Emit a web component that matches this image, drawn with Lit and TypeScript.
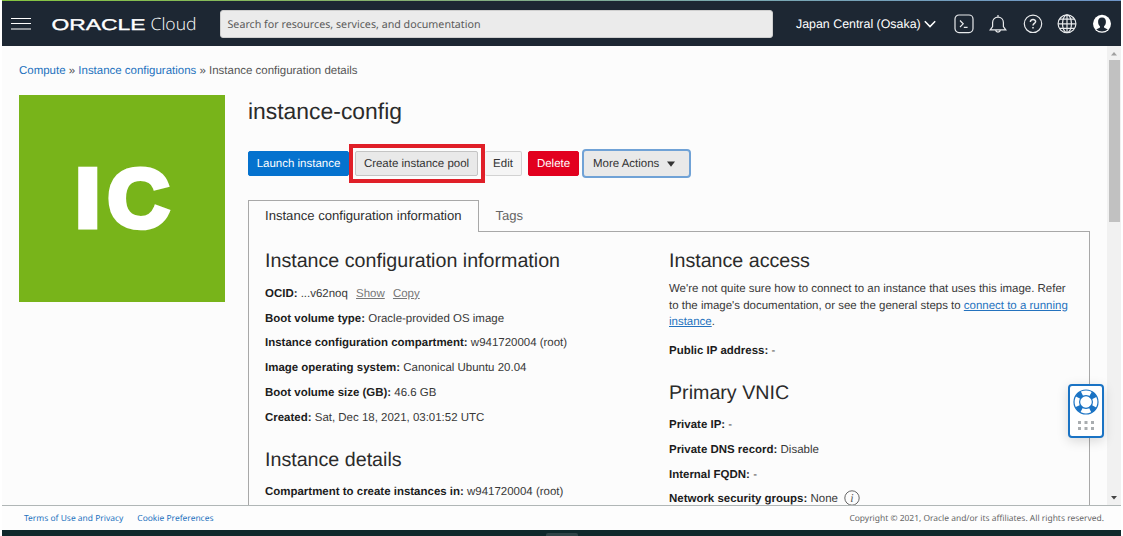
import { LitElement, html, css, svg } from "lit";
import { customElement, property } from "lit/decorators.js";

type Field = { label: string; value: string };

const CONFIG_FIELDS: Field[] = [
  { label: "Boot volume type", value: "Oracle-provided OS image" },
  { label: "Instance configuration compartment", value: "w941720004 (root)" },
  { label: "Image operating system", value: "Canonical Ubuntu 20.04" },
  { label: "Boot volume size (GB)", value: "46.6 GB" },
  { label: "Created", value: "Sat, Dec 18, 2021, 03:01:52 UTC" },
];

const VNIC_FIELDS: Field[] = [
  { label: "Private IP", value: "-" },
  { label: "Private DNS record", value: "Disable" },
  { label: "Internal FQDN", value: "-" },
];

@customElement("detail-row")
class DetailRow extends LitElement {
  @property() label = "";
  static styles = css`
    :host {
      display: block;
      height: 24.8px;
      line-height: 24.8px;
      white-space: nowrap;
    }
    .label {
      font-weight: 700;
      color: #1c1c1c;
    }
  `;
  render() {
    return html`<span class="label">${this.label}:</span> <slot></slot>`;
  }
}

@customElement("top-bar")
class TopBar extends LitElement {
  static styles = css`
    :host {
      display: flex;
      align-items: center;
      box-sizing: border-box;
      height: 46px;
      padding-top: 1px;
      flex: none;
      background: linear-gradient(90deg, #86c540, #86b070 35%, #7aa9b0 65%, #6d94c8) 0 0 / 100% 1px no-repeat #1d2733;
      color: #fff;
    }
    svg {
      display: block;
      flex: none;
      overflow: visible;
    }
    .menu {
      margin-left: 9px;
    }
    .brand {
      margin-left: 20px;
    }
    .search {
      margin-left: 21.5px;
      box-sizing: border-box;
      width: 553px;
      height: 28px;
      border-radius: 3px;
      background: #ebebeb;
      border: 1px solid #cfcfcf;
      padding-left: 7px;
      font: 10.7px/28px "Noto Sans", sans-serif;
      color: #5a5a5a;
      white-space: nowrap;
    }
    .region {
      margin-left: 23.5px;
      width: 125px;
      font-size: 12.4px;
      line-height: 16px;
      padding-top: 1px;
      white-space: nowrap;
    }
    .chev {
      margin-left: 2.5px;
    }
    .icons {
      display: flex;
      gap: 14.4px;
      margin-left: 18.5px;
    }
  `;
  render() {
    return html`
      <svg class="menu" width="20" height="12" viewBox="0 0 20 12">
        <path d="M0 .5h20M0 5.5h20M0 11h20" stroke="#fff" stroke-width="1.1" />
      </svg>
      <svg class="brand" width="147" height="20" viewBox="0 0 147 20">
        <text x="0.5" y="15.8" font-family="Liberation Sans, sans-serif" font-size="15.6" fill="#fff" stroke="#fff"
          stroke-width=".35" textLength="94" lengthAdjust="spacingAndGlyphs">ORACLE</text>
        <text x="99.5" y="15.8" font-family="Open Sans, sans-serif" font-weight="300" font-size="17" fill="#fff"
          textLength="46" lengthAdjust="spacingAndGlyphs">Cloud</text>
      </svg>
      <div class="search">Search for resources, services, and documentation</div>
      <div class="region">Japan Central (Osaka)</div>
      <svg class="chev" width="12" height="8" viewBox="0 0 12 8">
        <path d="M.8 1.2 6 6.6 11.2 1.2" fill="none" stroke="#fff" stroke-width="1.5" />
      </svg>
      <div class="icons">
        ${this.icon(svg`<rect x="1" y="1" width="18" height="17.6" rx="4" />
          <path d="M6 6.5 9.2 9.8 6 13M9.8 13.4H13.6" />`)}
        ${this.icon(svg`<path d="M2.2 15.8H17.8L15.4 12.6V8.5C15.4 5.2 13 3.2 10 3.2S4.6 5.2 4.6 8.5V12.6ZM10 3V1M7.6 16.2C8 18.8 12 18.8 12.4 16.2" />`)}
        ${this.icon(svg`<circle cx="10" cy="9.8" r="8.7" />
          <path stroke-width="1.5" d="M7.4 8C7.2 4.8 12.8 4.8 12.6 7.7C12.5 9.4 10 9.4 10 11.5M10 13V14.6" />`)}
        ${this.icon(svg`<circle cx="10" cy="9.8" r="8.9" /><ellipse cx="10" cy="9.8" rx="4.5" ry="8.9" />
          <path d="M10 1V18.7M1.1 9.8H18.9M2.6 5.2H17.4M2.6 14.4H17.4" />`)}
        ${this.icon(svg`<circle cx="10" cy="9.8" r="9" fill="#fff" stroke="none" />
          <path fill="#1d2733" stroke="none" d="M10 3.6C7.3 3.6 5.9 5.5 6.1 8.1C6.2 10.2 7 11.6 8 12.4V13.6C6.8 14.4 5.4 14.8 4.2 15.6C7.5 18.2 12.5 18.2 15.8 15.6C14.6 14.8 13.2 14.4 12 13.6V12.4C13 11.6 13.8 10.2 13.9 8.1C14.1 5.5 12.7 3.6 10 3.6Z" />`)}
      </div>
    `;
  }
  private icon(content: unknown) {
    return html`<svg width="20" height="20" viewBox="0 0 20 20" fill="none" stroke="#e8eaec" stroke-width="1.2">
      ${content}
    </svg>`;
  }
}

@customElement("app-root")
class AppRoot extends LitElement {
  static styles = css`
    :host {
      display: flex;
      flex-direction: column;
      box-sizing: border-box;
      width: 1123px;
      height: 536px;
      padding: 0 2px;
      overflow: hidden;
      background: #fff;
      position: relative;
      font-family: "Liberation Sans", Arial, sans-serif;
      font-size: 11.48px;
      color: #383838;
      text-rendering: geometricPrecision;
    }
    a {
      color: #2472be;
    }
    .body {
      display: flex;
      height: 459px;
      flex: none;
      background: #fcfcfc;
      overflow: hidden;
    }
    .page {
      flex: 1;
      padding-left: 17px;
    }
    .crumbs {
      height: 49px;
      line-height: 50px;
      white-space: nowrap;
      color: #555;
    }
    .crumbs a {
      text-decoration: none;
    }
    .columns {
      display: flex;
      gap: 23px;
    }
    .badge {
      width: 206px;
      height: 207px;
      flex: none;
      background: #78b41a;
    }
    .main {
      width: 842px;
    }
    h1 {
      margin: 0;
      font-size: 22.9px;
      font-weight: 400;
      line-height: 32px;
      height: 55px;
      color: #2b2b2b;
    }
    .actions {
      display: flex;
      align-items: center;
      height: 26px;
    }
    .btn {
      box-sizing: border-box;
      height: 25px;
      line-height: 24px;
      border: 1px solid #c4c4c4;
      border-radius: 2px;
      background: #e9e9e9;
      text-align: center;
      white-space: nowrap;
      color: #333;
    }
    .launch {
      width: 101px;
      background: #0572ce;
      border-color: #0572ce;
      color: #fff;
    }
    .marked {
      box-sizing: border-box;
      width: 136px;
      height: 39px;
      border: 4px solid #e01f28;
      padding: 3px 3px 3px 2px;
    }
    .edit {
      width: 37px;
      border-left: 0;
      background: #f5f5f5;
      border-color: #d2d2d2;
    }
    .delete {
      width: 51px;
      margin-left: 6px;
      background: #e2001f;
      border-color: #e2001f;
      color: #fff;
    }
    .more {
      width: 109px;
      height: 29px;
      line-height: 24px;
      margin-left: 3px;
      border: 2px solid #70a2d6;
      border-radius: 4px;
      display: flex;
      align-items: center;
      gap: 8px;
      padding: 1px 0 0 9px;
    }
    .tabs {
      display: flex;
      margin-top: 24px;
      height: 31px;
    }
    .tab {
      font-size: 13.1px;
      line-height: 32px;
      padding-left: 16.5px;
      color: #666;
      white-space: nowrap;
    }
    .active {
      box-sizing: border-box;
      width: 231px;
      height: 32px;
      padding-left: 16px;
      border: 1px solid #a8a8a8;
      border-bottom: 0;
      background: #fcfcfc;
      color: #2f2f2f;
      line-height: 30px;
      z-index: 1;
    }
    .panel {
      box-sizing: border-box;
      height: 420px;
      border: 1px solid #a8a8a8;
      display: grid;
      grid-template-columns: 404px 1fr;
      padding: 16px 0 0 16px;
    }
    h2 {
      margin: 0;
      font-size: 19.66px;
      font-weight: 400;
      line-height: 26px;
      height: 33.9px;
      color: #2b2b2b;
      white-space: nowrap;
    }
    .second {
      margin-top: 16px;
      height: 33.3px;
    }
    .vnic {
      margin-top: 16px;
      height: 33px;
    }
    .light {
      color: #777;
      margin-left: 5px;
    }
    .note {
      margin: 0;
      width: 410px;
      line-height: 16.4px;
      margin-top: -0.5px;
      margin-bottom: 8.5px;
    }
    .info {
      vertical-align: -4px;
      margin-left: 3px;
    }
    .scroll {
      width: 14px;
      background: #f1f1f1;
      display: flex;
      flex-direction: column;
      align-items: center;
      justify-content: space-between;
    }
    .thumb {
      width: 11px;
      height: 162px;
      background: #c1c1c1;
      margin-bottom: auto;
    }
    .arrow {
      display: block;
      height: 14px;
    }
    footer {
      display: flex;
      align-items: center;
      box-sizing: border-box;
      height: 25px;
      flex: none;
      border-top: 1px solid #b0b6b6;
      background: #fdfdfd;
      padding: 1px 17px 0 22px;
      font: 8.45px "Noto Sans", sans-serif;
      color: #666;
      white-space: nowrap;
    }
    footer a {
      text-decoration: none;
      margin-right: 14px;
    }
    .copy {
      margin-left: auto;
    }
    .taskbar {
      height: 6px;
      flex: none;
      background: #0f292c;
      display: flex;
      align-items: flex-end;
    }
    .handle {
      margin-left: 544px;
      width: 32px;
      height: 3px;
      background: #2f4447;
      border-radius: 2px 2px 0 0;
    }
    .help {
      position: absolute;
      left: 1068px;
      top: 384px;
      box-sizing: border-box;
      width: 36px;
      height: 54px;
      border: 2px solid #1a73c4;
      border-radius: 4px;
      background: #fff;
      box-shadow: 0 3px 12px rgba(0, 0, 0, 0.15);
    }
    .help svg {
      display: block;
    }
  `;

  render() {
    return html`
      <top-bar></top-bar>
      <div class="body">
        <div class="page">
          <div class="crumbs">
            <a>Compute</a> » <a>Instance configurations</a> » Instance configuration details
          </div>
          <div class="columns">
            <svg class="badge" viewBox="0 0 206 207">
              <text x="54" y="132.8" font-family="Liberation Sans, sans-serif" font-weight="700" font-size="87" fill="#fff"
                stroke="#fff" stroke-width="3" textLength="29.5" lengthAdjust="spacingAndGlyphs">I</text>
              <text x="88.5" y="131.8" font-family="Liberation Sans, sans-serif" font-weight="700" font-size="83" fill="#fff"
                stroke="#fff" stroke-width="5" textLength="62" lengthAdjust="spacingAndGlyphs">C</text>
            </svg>
            <div class="main">
              <h1>instance-config</h1>
              <div class="actions">
                <div class="btn launch">Launch instance</div>
                <div class="marked"><div class="btn">Create instance pool</div></div>
                <div class="btn edit">Edit</div>
                <div class="btn delete">Delete</div>
                <div class="btn more">
                  More Actions
                  <svg width="8" height="6"><path d="M0 .5H8L4 5.8Z" fill="#333" /></svg>
                </div>
              </div>
              <div class="tabs">
                <div class="tab active">Instance configuration information</div>
                <div class="tab">Tags</div>
              </div>
              <div class="panel">
                <section>
                  <h2>Instance configuration information</h2>
                  <detail-row label="OCID"
                    >...v62noq <a class="light"><u>Show</u></a> <a class="light"><u>Copy</u></a></detail-row
                  >
                  ${CONFIG_FIELDS.map((f) => html`<detail-row label=${f.label}>${f.value}</detail-row>`)}
                  <h2 class="second">Instance details</h2>
                  <detail-row label="Compartment to create instances in">w941720004 (root)</detail-row>
                </section>
                <section>
                  <h2>Instance access</h2>
                  <p class="note">
                    We're not quite sure how to connect to an instance that uses this image. Refer<br />to the image's
                    documentation, or see the general steps to <a><u>connect to a running<br />instance</u></a>.
                  </p>
                  <detail-row label="Public IP address">-</detail-row>
                  <h2 class="vnic">Primary VNIC</h2>
                  ${VNIC_FIELDS.map((f) => html`<detail-row label=${f.label}>${f.value}</detail-row>`)}
                  <detail-row label="Network security groups"
                    >None
                    <svg class="info" width="16" height="16" viewBox="0 0 16 16">
                      <circle cx="8" cy="8" r="7.2" fill="none" stroke="#666" />
                      <text x="6.2" y="11.5" font-family="Liberation Serif, serif" font-style="italic" font-size="12"
                        fill="#555">i</text>
                    </svg>
                  </detail-row>
                </section>
              </div>
            </div>
          </div>
        </div>
        <div class="scroll">
          <svg class="arrow" width="8" height="14"><path d="M1 9.5 4 6 7 9.5Z" fill="#a0a0a0" /></svg>
          <div class="thumb"></div>
          <svg class="arrow" width="8" height="14"><path d="M1 5 4 8.5 7 5Z" fill="#444" /></svg>
        </div>
      </div>
      <footer>
        <a>Terms of Use and Privacy</a>
        <a>Cookie Preferences</a>
        <span class="copy">Copyright © 2021, Oracle and/or its affiliates. All rights reserved.</span>
      </footer>
      <div class="taskbar"><div class="handle"></div></div>
      <div class="help">
        <svg width="32" height="50" viewBox="0 0 32 50">
          <g fill="none" stroke="#1a73c4">
            <circle cx="16" cy="16" r="9" stroke-width="6" stroke-dasharray="5.4 8.737" stroke-dashoffset="-4.4" />
            <circle cx="16" cy="16" r="12" stroke-width="1.2" />
            <circle cx="16" cy="16" r="6.4" stroke-width="1.2" />
          </g>
          <g fill="#a9adb0">
            ${[8, 14.5, 21].map((x) => [35, 41].map((y) => svg`<rect x=${x} y=${y} width="3" height="3" />`))}
          </g>
        </svg>
      </div>
    `;
  }
}
